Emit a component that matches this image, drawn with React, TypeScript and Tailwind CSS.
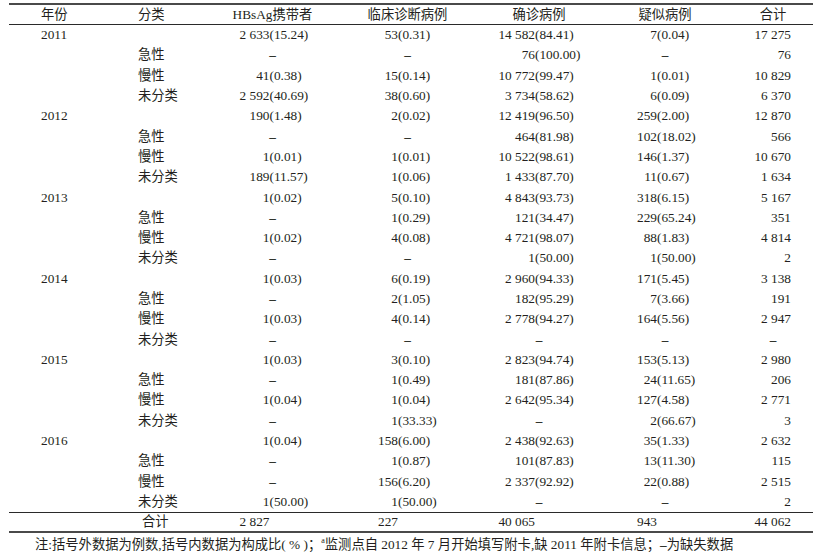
import React from "react";

type Row = { y: string; c: string; v: string[] };

const D = "–";

const rows: Row[] = [
  { y: "2011", c: "", v: ["2 633(15.24)", "53(0.31)", "14 582(84.41)", "7(0.04)", "17 275"] },
  { y: "", c: "急性", v: [D, D, "76(100.00)", D, "76"] },
  { y: "", c: "慢性", v: ["41(0.38)", "15(0.14)", "10 772(99.47)", "1(0.01)", "10 829"] },
  { y: "", c: "未分类", v: ["2 592(40.69)", "38(0.60)", "3 734(58.62)", "6(0.09)", "6 370"] },
  { y: "2012", c: "", v: ["190(1.48)", "2(0.02)", "12 419(96.50)", "259(2.00)", "12 870"] },
  { y: "", c: "急性", v: [D, D, "464(81.98)", "102(18.02)", "566"] },
  { y: "", c: "慢性", v: ["1(0.01)", "1(0.01)", "10 522(98.61)", "146(1.37)", "10 670"] },
  { y: "", c: "未分类", v: ["189(11.57)", "1(0.06)", "1 433(87.70)", "11(0.67)", "1 634"] },
  { y: "2013", c: "", v: ["1(0.02)", "5(0.10)", "4 843(93.73)", "318(6.15)", "5 167"] },
  { y: "", c: "急性", v: [D, "1(0.29)", "121(34.47)", "229(65.24)", "351"] },
  { y: "", c: "慢性", v: ["1(0.02)", "4(0.08)", "4 721(98.07)", "88(1.83)", "4 814"] },
  { y: "", c: "未分类", v: [D, D, "1(50.00)", "1(50.00)", "2"] },
  { y: "2014", c: "", v: ["1(0.03)", "6(0.19)", "2 960(94.33)", "171(5.45)", "3 138"] },
  { y: "", c: "急性", v: [D, "2(1.05)", "182(95.29)", "7(3.66)", "191"] },
  { y: "", c: "慢性", v: ["1(0.03)", "4(0.14)", "2 778(94.27)", "164(5.56)", "2 947"] },
  { y: "", c: "未分类", v: [D, D, D, D, D] },
  { y: "2015", c: "", v: ["1(0.03)", "3(0.10)", "2 823(94.74)", "153(5.13)", "2 980"] },
  { y: "", c: "急性", v: [D, "1(0.49)", "181(87.86)", "24(11.65)", "206"] },
  { y: "", c: "慢性", v: ["1(0.04)", "1(0.04)", "2 642(95.34)", "127(4.58)", "2 771"] },
  { y: "", c: "未分类", v: [D, "1(33.33)", D, "2(66.67)", "3"] },
  { y: "2016", c: "", v: ["1(0.04)", "158(6.00)", "2 438(92.63)", "35(1.33)", "2 632"] },
  { y: "", c: "急性", v: [D, "1(0.87)", "101(87.83)", "13(11.30)", "115"] },
  { y: "", c: "慢性", v: [D, "156(6.20)", "2 337(92.92)", "22(0.88)", "2 515"] },
  { y: "", c: "未分类", v: ["1(50.00)", "1(50.00)", D, D, "2"] },
];

const colW = ["w-[115px]", "w-[155px]", "w-[108px]", "w-[144px]"];
const anchorW = ["w-[54.5px]", "w-[68px]", "w-[50px]", "w-[64px]"];

function Num({ v, i }: { v: string; i: number }) {
  if (v === D) {
    return <div className={`${colW[i]} shrink-0 text-center font-bold`}>–</div>;
  }
  const p = v.indexOf("(");
  const a = p < 0 ? v : v.slice(0, p);
  const b = p < 0 ? "" : v.slice(p);
  return (
    <div className={`${colW[i]} shrink-0 flex`}>
      <span className={`${anchorW[i]} shrink-0 text-right whitespace-pre`}>{a}</span>
      <span className="whitespace-pre">{b}</span>
    </div>
  );
}

function Total({ v }: { v: string }) {
  if (v === D) {
    return <div className="w-[72px] shrink-0 text-center font-bold">–</div>;
  }
  return <div className="w-[72px] shrink-0 text-right pr-[18px] whitespace-pre">{v}</div>;
}

export default function App() {
  return (
    <div className="w-[822px] h-[557px] bg-white text-[#231f20] text-[13.3px] font-['Liberation_Serif','Noto_Sans_CJK_SC',serif] pt-[3px]">
      <div className="ml-[9px] w-[804px]">
        <div className="h-[2px] bg-[#4a4a4a]" />
        <div className="flex h-[19px] items-center leading-[19px]">
          <div className="w-[98px] shrink-0 pl-[32px]">年份</div>
          <div className="w-[108px] shrink-0 pl-[31px]">分类</div>
          <div className="w-[115px] shrink-0 text-center">HBsAg携带者</div>
          <div className="w-[155px] shrink-0 text-center">临床诊断病例</div>
          <div className="w-[108px] shrink-0 text-center">确诊病例</div>
          <div className="w-[144px] shrink-0 text-center">疑似病例</div>
          <div className="w-[72px] shrink-0 text-center">合计</div>
        </div>
        <div className="h-px bg-[#2a2a2a]" />
        <div className="flex flex-col">
          {rows.map((r, k) => (
            <div key={k} className="flex h-[20.3px] items-center leading-[20px]">
              <div className="w-[98px] shrink-0 pl-[32px]">{r.y}</div>
              <div className="w-[108px] shrink-0 pl-[31px]">{r.c}</div>
              <Num v={r.v[0]} i={0} />
              <Num v={r.v[1]} i={1} />
              <Num v={r.v[2]} i={2} />
              <Num v={r.v[3]} i={3} />
              <Total v={r.v[4]} />
            </div>
          ))}
        </div>
        <div className="h-px bg-[#2a2a2a]" />
        <div className="flex h-[18px] items-center leading-[18px]">
          <div className="w-[98px] shrink-0" />
          <div className="w-[108px] shrink-0 pl-[35px]">合计</div>
          <Num v="2 827" i={0} />
          <Num v="227" i={1} />
          <Num v="40 065" i={2} />
          <Num v="943" i={3} />
          <Total v="44 062" />
        </div>
        <div className="h-[2px] bg-[#4a4a4a]" />
      </div>
      <div className="h-[24px] flex items-center pl-[35px] whitespace-pre leading-[24px]">
        注:括号外数据为例数,括号内数据为构成比( % )；<span className="relative -top-[4px] text-[8px]">a</span>监测点自 2012 年 7 月开始填写附卡,缺 2011 年附卡信息；<span className="font-bold">–</span>为缺失数据
      </div>
    </div>
  );
}
